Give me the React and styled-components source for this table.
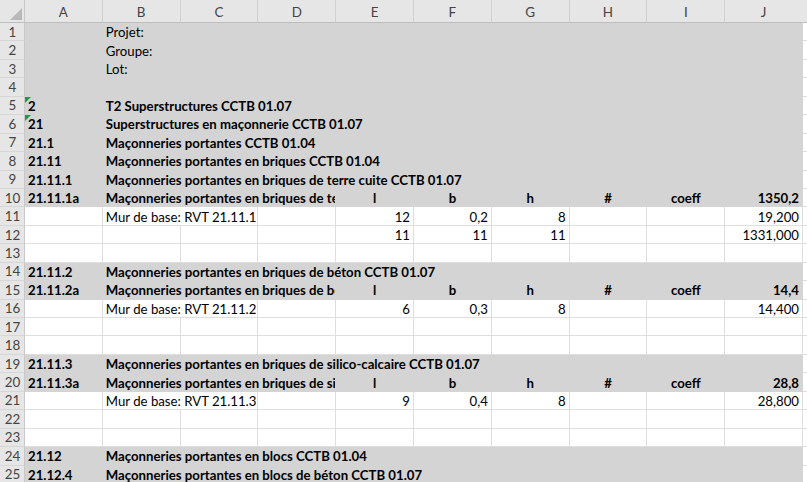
import React from "react";
import styled, { createGlobalStyle, css } from "styled-components";

const Global = createGlobalStyle`
  html, body { margin: 0; padding: 0; background: #fff; overflow: hidden; }
  body { font-family: "Lato", "Liberation Sans", sans-serif; }
`;

const COL_W = 77.8;
const ROW_H = 18.45;

const Sheet = styled.div`
  display: grid;
  grid-template-columns: 25px repeat(10, ${COL_W}px) 1fr;
  grid-template-rows: 23px;
  grid-auto-rows: ${ROW_H}px;
  width: 807px;
  height: 482px;
  overflow: hidden;
  font-size: 13.2px;
  color: #000;
`;

const Corner = styled.div`
  background: #e6e6e6;
  border-right: 1px solid #c8c8c8;
  border-bottom: 1px solid #bdbdbd;
  box-sizing: border-box;
  display: flex;
  align-items: flex-end;
  justify-content: flex-end;
  padding: 0 2px 2px 0;
`;

const ColHead = styled.div`
  background: #e6e6e6;
  color: #444;
  border-right: 1px solid ${(p) => (p.$last ? "#e6e6e6" : "#d0d0d0")};
  border-bottom: 1px solid #bdbdbd;
  box-sizing: border-box;
  display: flex;
  align-items: center;
  justify-content: center;
  font-size: 13.4px;
  padding-top: 2px;
`;

const RowHead = styled.div`
  background: #e6e6e6;
  color: #444;
  border-right: 1px solid #c8c8c8;
  border-bottom: 1px solid #d6d6d6;
  box-sizing: border-box;
  display: flex;
  align-items: center;
  justify-content: center;
  padding-left: 1px;
  font-size: 13.4px;
`;

const Cell = styled.div`
  position: relative;
  box-sizing: border-box;
  display: flex;
  align-items: center;
  padding: 1px 3px 0 3px;
  white-space: nowrap;
  overflow: hidden;
  background: ${(p) => (p.$fill ? "#d4d4d4" : "#fff")};
  ${(p) =>
    p.$fill
      ? css`
          border-right: 1px solid #d4d4d4;
          border-bottom: 1px solid #d4d4d4;
        `
      : css`
          border-right: 1px solid #dedede;
          border-bottom: 1px solid #dedede;
        `}
  ${(p) => p.$span > 1 && css`padding-right: 0;`}
  font-weight: ${(p) => (p.$bold ? 700 : 400)};
  justify-content: ${(p) =>
    p.$align === "right" ? "flex-end" : p.$align === "center" ? "center" : "flex-start"};
  grid-column: span ${(p) => p.$span || 1};
`;

const Flag = styled.span`
  position: absolute;
  left: 0;
  top: 0;
  width: 0;
  height: 0;
  border-top: 6px solid #1f9a45;
  border-right: 6px solid transparent;
`;

const Dot = styled.span`
  position: absolute;
  width: 2px;
  height: 1px;
  background: #9a9a9a;
  left: ${(p) => p.$x}px;
  top: ${(p) => p.$y}px;
`;

const COLS = ["A", "B", "C", "D", "E", "F", "G", "H", "I", "J"];

const dims = (val) => [
  { c: 4, t: "l", b: true, a: "center" },
  { c: 5, t: "b", b: true, a: "center" },
  { c: 6, t: "h", b: true, a: "center" },
  { c: 7, t: "#", b: true, a: "center" },
  { c: 8, t: "coeff", b: true, a: "center" },
  { c: 9, t: val, b: true, a: "right" },
];

const rows = [
  { fill: true, cells: [{ c: 1, t: "Projet:" }] },
  { fill: true, cells: [{ c: 1, t: "Groupe:", dot: true }] },
  { fill: true, cells: [{ c: 1, t: "Lot:" }] },
  { fill: true, cells: [] },
  { fill: true, cells: [{ c: 0, t: "2", b: true, flag: true }, { c: 1, t: "T2 Superstructures CCTB 01.07", b: true, s: 9 }] },
  { fill: true, cells: [{ c: 0, t: "21", b: true, flag: true }, { c: 1, t: "Superstructures en maçonnerie CCTB 01.07", b: true, s: 9 }] },
  { fill: true, cells: [{ c: 0, t: "21.1", b: true }, { c: 1, t: "Maçonneries portantes CCTB 01.04", b: true, s: 9 }] },
  { fill: true, cells: [{ c: 0, t: "21.11", b: true }, { c: 1, t: "Maçonneries portantes en briques CCTB 01.04", b: true, s: 9 }] },
  { fill: true, cells: [{ c: 0, t: "21.11.1", b: true }, { c: 1, t: "Maçonneries portantes en briques de terre cuite CCTB 01.07", b: true, s: 9 }] },
  { fill: true, cells: [{ c: 0, t: "21.11.1a", b: true }, { c: 1, t: "Maçonneries portantes en briques de terre cuite", b: true, s: 3 }, ...dims("1350,2")] },
  { fill: false, cells: [{ c: 1, t: "Mur de base: RVT 21.11.1", s: 2 }, { c: 4, t: "12", a: "right" }, { c: 5, t: "0,2", a: "right" }, { c: 6, t: "8", a: "right" }, { c: 9, t: "19,200", a: "right" }] },
  { fill: false, cells: [{ c: 4, t: "11", a: "right" }, { c: 5, t: "11", a: "right" }, { c: 6, t: "11", a: "right" }, { c: 9, t: "1331,000", a: "right" }] },
  { fill: false, cells: [] },
  { fill: true, cells: [{ c: 0, t: "21.11.2", b: true }, { c: 1, t: "Maçonneries portantes en briques de béton CCTB 01.07", b: true, s: 9 }] },
  { fill: true, cells: [{ c: 0, t: "21.11.2a", b: true }, { c: 1, t: "Maçonneries portantes en briques de béton", b: true, s: 3 }, ...dims("14,4")] },
  { fill: false, cells: [{ c: 1, t: "Mur de base: RVT 21.11.2", s: 2 }, { c: 4, t: "6", a: "right" }, { c: 5, t: "0,3", a: "right" }, { c: 6, t: "8", a: "right" }, { c: 9, t: "14,400", a: "right" }] },
  { fill: false, cells: [] },
  { fill: false, cells: [] },
  { fill: true, cells: [{ c: 0, t: "21.11.3", b: true }, { c: 1, t: "Maçonneries portantes en briques de silico-calcaire CCTB 01.07", b: true, s: 9 }] },
  { fill: true, cells: [{ c: 0, t: "21.11.3a", b: true }, { c: 1, t: "Maçonneries portantes en briques de silico", b: true, s: 3 }, ...dims("28,8")] },
  { fill: false, cells: [{ c: 1, t: "Mur de base: RVT 21.11.3", s: 2 }, { c: 4, t: "9", a: "right" }, { c: 5, t: "0,4", a: "right" }, { c: 6, t: "8", a: "right" }, { c: 9, t: "28,800", a: "right" }] },
  { fill: false, cells: [] },
  { fill: false, cells: [] },
  { fill: true, cells: [{ c: 0, t: "21.12", b: true }, { c: 1, t: "Maçonneries portantes en blocs CCTB 01.04", b: true, s: 9 }] },
  { fill: true, cells: [{ c: 0, t: "21.12.4", b: true }, { c: 1, t: "Maçonneries portantes en blocs de béton CCTB 01.07", b: true, s: 9 }] },
];

function SheetRow({ index, row }) {
  const out = [<RowHead key="h">{index + 1}</RowHead>];
  let col = 0;
  while (col < 10) {
    const cell = row.cells.find((c) => c.c === col);
    if (cell) {
      const span = cell.s || 1;
      out.push(
        <Cell key={col} $fill={row.fill} $bold={cell.b} $align={cell.a} $span={span}>
          {cell.flag && <Flag />}
          {cell.t}
          {cell.dot && <Dot $x={101} $y={7} />}
        </Cell>
      );
      col += span;
    } else {
      out.push(<Cell key={col} $fill={row.fill} />);
      col += 1;
    }
  }
  out.push(<Cell key="k" />);
  return out;
}

export default function App() {
  return (
    <>
      <Global />
      <Sheet>
        <Corner>
          <svg width="12" height="12" viewBox="0 0 12 12">
            <polygon points="12,0 12,12 0,12" fill="#b9b9b9" />
          </svg>
        </Corner>
        {COLS.map((c, i) => (
          <ColHead key={c} $last={i === 9}>{c}</ColHead>
        ))}
        <ColHead $last />
        {rows.map((r, i) => (
          <SheetRow key={i} index={i} row={r} />
        ))}
      </Sheet>
    </>
  );
}
